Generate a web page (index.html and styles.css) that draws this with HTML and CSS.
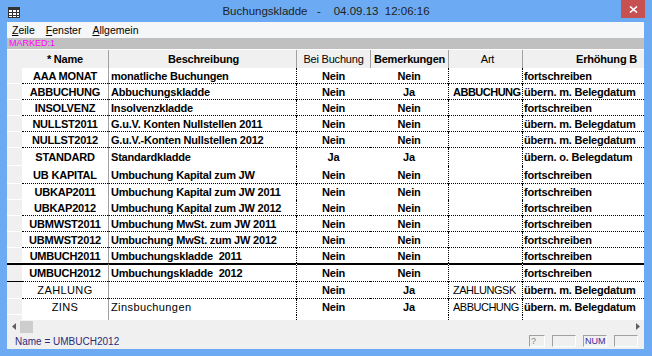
FILE: index.html
```html
<!DOCTYPE html>
<html lang="de">
<head>
    <title>Buchungskladde</title>
    <link rel="stylesheet" href="styles.css">
</head>
<body>
    <div class="window">
        <div class="titlebar">
            <svg class="app-icon" width="12" height="11" viewBox="0 0 12 11">
                <rect x="0.5" y="0.5" width="11" height="10" fill="#fff" stroke="#333"/>
                <rect x="0" y="0" width="12" height="3" fill="#333"/>
                <path d="M4.5 3v8M8.5 3v8M0 5.5h12M0 8.5h12" stroke="#333" fill="none"/>
            </svg>
            <div class="title">Buchungskladde   -    04.09.13  12:06:16</div>
            <div class="close">
                <svg width="9" height="7" viewBox="0 0 9 7">
                    <path d="M1 0.5l7 6M8 0.5l-7 6" stroke="#fff" stroke-width="1.6" fill="none"/>
                </svg>
            </div>
        </div>

        <div class="client">
            <div class="menubar">
                <span><u>Z</u>eile</span>
                <span><u>F</u>enster</span>
                <span><u>A</u>llgemein</span>
            </div>
            <div class="marked">MARKED:1</div>

            <div class="grid">
                <div class="row head">
                    <div class="sel"></div>
                    <div class="c-name">* Name</div>
                    <div class="c-desc">Beschreibung</div>
                    <div class="c-bei">Bei Buchung</div>
                    <div class="c-bem">Bemerkungen</div>
                    <div class="c-art">Art</div>
                    <div class="c-erh">Erhöhung B</div>
                </div>

                <div class="body">
                    <div class="row">
                        <div class="sel"></div><div class="c-name">AAA MONAT</div><div class="c-desc">monatliche Buchungen</div>
                        <div class="c-bei">Nein</div><div class="c-bem">Nein</div><div class="c-art"></div><div class="c-erh">fortschreiben</div>
                    </div>
                    <div class="row">
                        <div class="sel"></div><div class="c-name">ABBUCHUNG</div><div class="c-desc">Abbuchungskladde</div>
                        <div class="c-bei">Nein</div><div class="c-bem">Ja</div><div class="c-art"><span>ABBUCHUNG</span></div><div class="c-erh">übern. m. Belegdatum</div>
                    </div>
                    <div class="row">
                        <div class="sel"></div><div class="c-name">INSOLVENZ</div><div class="c-desc">Insolvenzkladde</div>
                        <div class="c-bei">Nein</div><div class="c-bem">Nein</div><div class="c-art"></div><div class="c-erh">fortschreiben</div>
                    </div>
                    <div class="row">
                        <div class="sel"></div><div class="c-name">NULLST2011</div><div class="c-desc">G.u.V. Konten Nullstellen 2011</div>
                        <div class="c-bei">Nein</div><div class="c-bem">Nein</div><div class="c-art"></div><div class="c-erh">übern. m. Belegdatum</div>
                    </div>
                    <div class="row">
                        <div class="sel"></div><div class="c-name">NULLST2012</div><div class="c-desc">G.u.V.-Konten Nullstellen 2012</div>
                        <div class="c-bei">Nein</div><div class="c-bem">Nein</div><div class="c-art"></div><div class="c-erh">übern. m. Belegdatum</div>
                    </div>
                    <div class="row tall nosep">
                        <div class="sel"></div><div class="c-name">STANDARD</div><div class="c-desc">Standardkladde</div>
                        <div class="c-bei">Ja</div><div class="c-bem">Ja</div><div class="c-art"></div><div class="c-erh">übern. o. Belegdatum</div>
                    </div>
                    <div class="row tall">
                        <div class="sel"></div><div class="c-name">UB KAPITAL</div><div class="c-desc">Umbuchung Kapital zum JW</div>
                        <div class="c-bei">Nein</div><div class="c-bem">Nein</div><div class="c-art"></div><div class="c-erh">fortschreiben</div>
                    </div>
                    <div class="row nosep">
                        <div class="sel"></div><div class="c-name">UBKAP2011</div><div class="c-desc">Umbuchung Kapital zum JW 2011</div>
                        <div class="c-bei">Nein</div><div class="c-bem">Nein</div><div class="c-art"></div><div class="c-erh">fortschreiben</div>
                    </div>
                    <div class="row">
                        <div class="sel"></div><div class="c-name">UBKAP2012</div><div class="c-desc">Umbuchung Kapital zum JW 2012</div>
                        <div class="c-bei">Nein</div><div class="c-bem">Nein</div><div class="c-art"></div><div class="c-erh">fortschreiben</div>
                    </div>
                    <div class="row">
                        <div class="sel"></div><div class="c-name">UBMWST2011</div><div class="c-desc">Umbuchung MwSt. zum JW 2011</div>
                        <div class="c-bei">Nein</div><div class="c-bem">Nein</div><div class="c-art"></div><div class="c-erh">fortschreiben</div>
                    </div>
                    <div class="row">
                        <div class="sel"></div><div class="c-name">UBMWST2012</div><div class="c-desc">Umbuchung MwSt. zum JW 2012</div>
                        <div class="c-bei">Nein</div><div class="c-bem">Nein</div><div class="c-art"></div><div class="c-erh">fortschreiben</div>
                    </div>
                    <div class="row short nosep">
                        <div class="sel"></div><div class="c-name">UMBUCH2011</div><div class="c-desc">Umbuchungskladde&nbsp; 2011</div>
                        <div class="c-bei">Nein</div><div class="c-bem">Nein</div><div class="c-art"></div><div class="c-erh">fortschreiben</div>
                    </div>
                    <div class="row current">
                        <div class="sel"></div><div class="c-name">UMBUCH2012</div><div class="c-desc">Umbuchungskladde&nbsp; 2012</div>
                        <div class="c-bei">Nein</div><div class="c-bem">Nein</div><div class="c-art"></div><div class="c-erh">fortschreiben</div>
                    </div>
                    <div class="row mid">
                        <div class="sel"></div><div class="c-name light">ZAHLUNG</div><div class="c-desc"></div>
                        <div class="c-bei">Nein</div><div class="c-bem">Ja</div><div class="c-art light"><span>ZAHLUNGSK</span></div><div class="c-erh">übern. m. Belegdatum</div>
                    </div>
                    <div class="row nosep">
                        <div class="sel"></div><div class="c-name light">ZINS</div><div class="c-desc light">Zinsbuchungen</div>
                        <div class="c-bei">Nein</div><div class="c-bem">Ja</div><div class="c-art light"><span>ABBUCHUNG</span></div><div class="c-erh">übern. m. Belegdatum</div>
                    </div>
                    <div class="row filler">
                        <div class="sel"></div><div class="c-name"></div><div class="c-desc"></div>
                        <div class="c-bei"></div><div class="c-bem"></div><div class="c-art"></div><div class="c-erh"></div>
                    </div>
                </div>
            </div>

            <div class="hscroll">
                <span class="arrow">
                    <svg width="4" height="7" viewBox="0 0 4 7"><path d="M4 0v7L0 3.5z" fill="#606060"/></svg>
                </span>
                <span class="thumb"></span>
                <span class="track"></span>
                <span class="arrow">
                    <svg width="4" height="7" viewBox="0 0 4 7"><path d="M0 0v7l4-3.5z" fill="#606060"/></svg>
                </span>
            </div>

            <div class="statusbar">
                <span class="status-text">Name = UMBUCH2012</span>
                <span class="pane help">?</span>
                <span class="pane"></span>
                <span class="pane num">NUM</span>
                <span class="pane"></span>
            </div>
        </div>
    </div>
</body>
</html>
```

FILE: styles.css
```css
body {
    margin: 0;
    font-family: "Liberation Sans", Arial, sans-serif;
    color: #000;
}
.window {
    width: 652px;
    height: 356px;
    background-color: #6cabf4;
    display: flex;
    flex-direction: column;
}
.titlebar {
    height: 22px;
    flex-shrink: 0;
    display: grid;
    grid-template-columns: 1fr auto 1fr;
}
.app-icon {
    margin: 7px 0 0 8px;
}
.title {
    font-size: 11.5px;
    line-height: 23px;
    color: #1e1e1e;
    white-space: pre;
}
.close {
    justify-self: end;
    width: 24px;
    height: 18px;
    margin-right: 7px;
    background-color: #c75050;
    display: flex;
    align-items: center;
    justify-content: center;
}
.client {
    flex: 1;
    min-height: 0;
    margin: 0 8px 7px 7px;
    background-color: #f0f0f0;
    display: flex;
    flex-direction: column;
}
.menubar {
    height: 16px;
    flex-shrink: 0;
    background-color: #f5f6f7;
    display: flex;
    gap: 11px;
    padding-left: 5px;
    font-size: 10.5px;
    line-height: 16px;
}
.marked {
    height: 11px;
    flex-shrink: 0;
    background-color: #c0c0c0;
    color: #ff00ff;
    font-size: 9px;
    line-height: 11px;
    padding-left: 2px;
}
.grid {
    flex: 1;
    min-height: 0;
    display: flex;
    flex-direction: column;
    background-color: #fff;
}
.row {
    display: grid;
    grid-template-columns: 15px 86px 188px 74px 78px 74px 122px;
    height: 16px;
    flex-shrink: 0;
}
.row > div {
    box-sizing: border-box;
    overflow: hidden;
    white-space: nowrap;
    display: flex;
    align-items: center;
    font-size: 11px;
    font-weight: bold;
    letter-spacing: -0.2px;
}
.head {
    height: 19px;
    box-sizing: border-box;
    border-top: 1px solid #fff;
    background-color: #f0f0f0;
}
.head > div {
    justify-content: center;
}
.head .c-desc,
.head .c-bei,
.head .c-bem,
.head .c-art,
.head .c-erh {
    border-left: 1px solid #a0a0a0;
}
.head .c-bei,
.head .c-art {
    font-weight: normal;
}
.head .c-erh {
    justify-content: flex-end;
    padding-right: 7px;
}
.body {
    flex: 1;
    display: flex;
    flex-direction: column;
}
.body .row > div {
    border-bottom: 1px dotted #000;
}
.body .row > .sel {
    background-color: #f0f0f0;
    border-bottom: 1px solid #fff;
}
.body .nosep > div {
    border-bottom: none;
}
.tall {
    height: 18px;
}
.short {
    height: 15px;
}
.mid {
    height: 17px;
}
.current {
    height: 19px;
}
.body .current > div {
    border-top: 2px solid #000;
}
.body .current > .sel {
    border-bottom: 1px solid #000;
}
.filler {
    flex: 1;
}
.body .filler > div,
.body .filler > .sel {
    border-bottom: none;
}
.c-name {
    justify-content: center;
}
.c-desc {
    padding-left: 2px;
    border-left: 1px solid #a0a0a0;
}
.c-bei {
    justify-content: center;
    border-left: 1px dotted #000;
}
.c-bem {
    justify-content: center;
}
.c-art {
    padding-left: 4px;
    border-left: 1px dotted #000;
}
.c-art span {
    display: block;
    max-width: 68px;
    overflow: hidden;
    letter-spacing: -0.5px;
}
.c-erh {
    padding-left: 1px;
    border-left: 1px dotted #000;
}
.row > .light {
    font-weight: normal;
    letter-spacing: 0.4px;
}
.row > .c-art.light span {
    letter-spacing: -0.5px;
}
.hscroll {
    height: 13px;
    flex-shrink: 0;
    display: flex;
    background-color: #f0f0f0;
}
.arrow {
    width: 13px;
    display: flex;
    align-items: center;
    justify-content: center;
}
.thumb {
    width: 13px;
    margin-top: 1px;
    background-color: #cdcdcd;
}
.track {
    flex: 1;
}
.statusbar {
    height: 16px;
    flex-shrink: 0;
    display: flex;
    align-items: center;
    gap: 7px;
    padding: 0 6px 0 8px;
    font-size: 10px;
}
.status-text {
    flex: 1;
    color: #2b2b7a;
}
.pane {
    width: 24px;
    height: 12px;
    box-sizing: border-box;
    border: 1px solid;
    border-color: #a0a0a0 #fff #fff #a0a0a0;
    font-size: 9px;
    line-height: 10px;
    padding-left: 1px;
}
.help {
    width: 16px;
    color: #808080;
}
.num {
    color: #3a2aa0;
}
```
